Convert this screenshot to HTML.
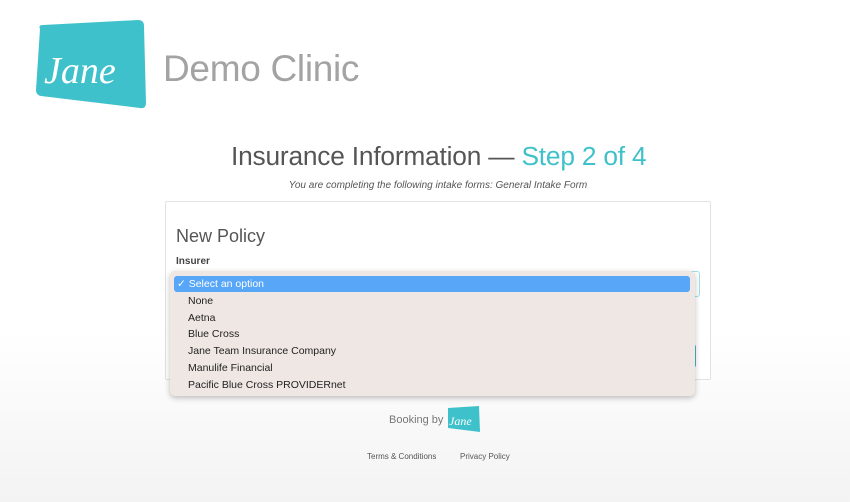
<!DOCTYPE html>
<html><head><meta charset="utf-8"><style>
*{margin:0;padding:0;box-sizing:border-box}
body{width:850px;height:502px;overflow:hidden;font-family:"Liberation Sans",sans-serif;background:linear-gradient(#fff 0,#fff 330px,#f3f3f3 502px);position:relative}
.abs{position:absolute}
</style></head><body>
<svg class="abs" style="left:30px;top:15px" width="120" height="100" viewBox="0 0 120 100">
<path d="M10 14 Q8 10 13 10 L108 5 Q114 5 114 11 L116 88 Q116 94 110 93 L11 81 Q6 80 6 75 Z" fill="#3fc1cb"/>
<text x="14" y="68" font-family="Liberation Serif,serif" font-style="italic" font-size="38" fill="#fff">Jane</text>
</svg>
<div class="abs" style="left:163px;top:48px;font-size:37px;color:#a3a3a3;letter-spacing:-0.3px">Demo Clinic</div>
<div class="abs" style="left:231px;top:141px;white-space:nowrap;font-size:26.3px;color:#555;letter-spacing:-0.2px">Insurance Information — <span style="color:#3fc1cb">Step 2 of 4</span></div>
<div class="abs" style="left:0;width:876px;top:180px;text-align:center;font-size:10px;font-style:italic;color:#555">You are completing the following intake forms: General Intake Form</div>
<div class="abs" style="left:165px;top:201px;width:546px;height:179px;border:1px solid #e2e2e2;background:#fff;border-radius:2px"></div>
<div class="abs" style="left:176px;top:226px;font-size:18px;color:#555">New Policy</div>
<div class="abs" style="left:176px;top:256px;font-size:10px;font-weight:bold;color:#444">Insurer</div>
<div class="abs" style="left:172px;top:271px;width:528px;height:26px;border:1px solid #9fdfe3;border-radius:3px"></div>
<div class="abs" style="left:688px;top:344px;width:8px;height:24px;background:#3fb8c2;border-radius:0 3px 3px 0"></div>
<div class="abs" style="left:170px;top:271px;width:525px;height:125px;background:#efe7e3;border-radius:5px;box-shadow:0 2px 6px rgba(0,0,0,.25);font-size:10.5px;color:#222">
<div style="position:absolute;left:4px;top:5px;width:516px;height:16px;background:#58a6f7;border-radius:3px;color:#fff;line-height:16px;padding-left:3px">✓ Select an option</div>
<div style="position:absolute;left:18px;top:22px;line-height:16.7px">None<br>Aetna<br>Blue Cross<br>Jane Team Insurance Company<br>Manulife Financial<br>Pacific Blue Cross PROVIDERnet</div>
</div>
<div class="abs" style="left:389px;top:414px;font-size:11px;color:#777">Booking by</div>
<svg class="abs" style="left:446px;top:405px" width="36" height="30" viewBox="0 0 36 30"><path d="M2 3 L33 1 L34 27 L2 23 Z" fill="#3fc1cb"/><text x="3" y="20" font-family="Liberation Serif,serif" font-style="italic" font-size="12" fill="#fff">Jane</text></svg>
<div class="abs" style="left:367px;top:452px;font-size:8px;color:#555">Terms &amp; Conditions</div>
<div class="abs" style="left:460px;top:452px;font-size:8px;color:#555">Privacy Policy</div>
</body></html>
